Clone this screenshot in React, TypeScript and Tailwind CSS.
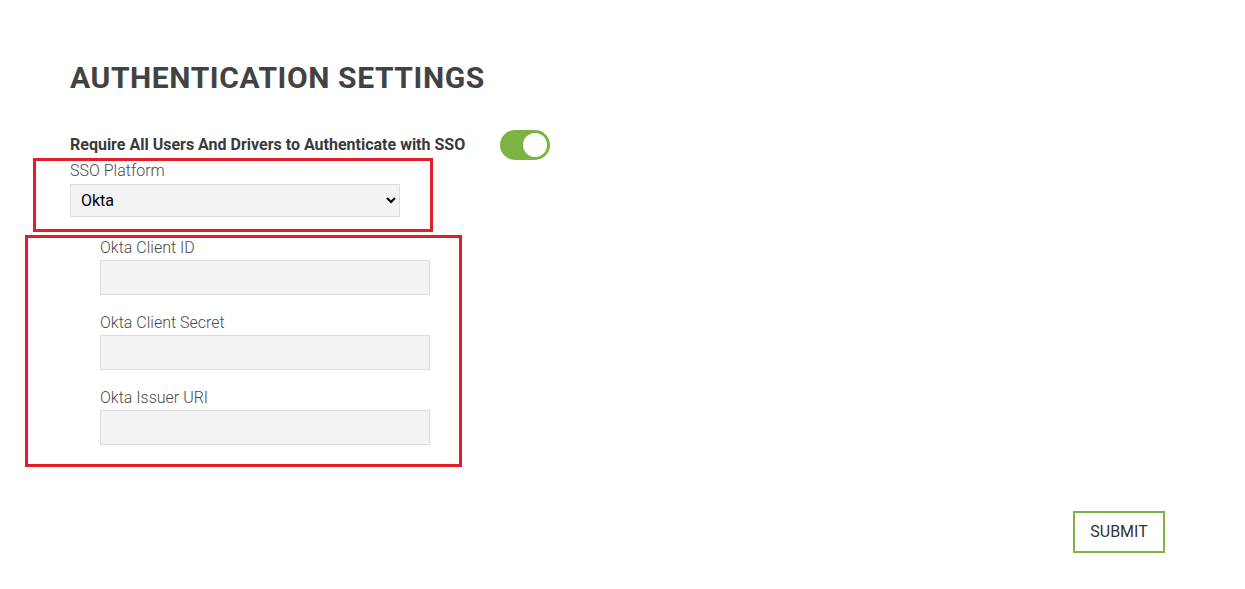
import { useState } from "react";

function Field({ label }: { label: string }) {
  return (
    <div className="flex flex-col">
      <label className="text-[16px] font-light leading-[20px] text-[#4a4a4a]">{label}</label>
      <input
        type="text"
        className="mt-[2px] h-[35px] w-[330px] border border-[#dcdcdc] bg-[#f3f3f3] px-2 text-[15px] outline-none"
      />
    </div>
  );
}

export default function App() {
  const [sso, setSso] = useState(true);

  return (
    <div className="min-h-[589px] w-full bg-white font-['Roboto',sans-serif] text-[#333]">
      <div className="pl-[70px] pr-[80px] pt-[63px]">
        <h1 className="text-[30px] font-bold leading-[30px] tracking-[0.6px] text-[#424242]">
          AUTHENTICATION SETTINGS
        </h1>

        <div className="mt-[37px] flex items-center gap-[35px]">
          <span className="text-[16px] font-bold leading-[20px] text-[#3a3a3a]">
            Require All Users And Drivers to Authenticate with SSO
          </span>
          <button
            onClick={() => setSso(!sso)}
            className="flex h-[30px] w-[50px] items-center rounded-full bg-[#7cb342] px-[3px]"
          >
            <span
              className={
                sso
                  ? "ml-auto h-[24px] w-[24px] rounded-full bg-white"
                  : "h-[24px] w-[24px] rounded-full bg-white"
              }
            />
          </button>
        </div>

        <div className="-ml-[37px] mt-[-2px] w-[400px] border-[3px] border-[#e41e26] pb-[12px] pl-[34px]">
          <label className="block text-[16px] font-light leading-[20px] text-[#4a4a4a]">SSO Platform</label>
          <select className="mt-[3px] h-[33px] w-[330px] border border-[#dcdcdc] bg-[#f3f3f3] px-[6px] text-[16px] text-black outline-none">
            <option>Okta</option>
          </select>
        </div>

        <div className="-ml-[45px] mt-[3px] flex w-[437px] flex-col gap-[18px] border-[3px] border-[#e41e26] pb-[19px] pl-[72px]">
          <Field label="Okta Client ID" />
          <Field label="Okta Client Secret" />
          <Field label="Okta Issuer URI" />
        </div>

        <div className="mt-[44px] flex justify-end">
          <button className="h-[42px] w-[92px] border-2 border-[#7cb342] bg-white text-[16px] text-[#333]">
            SUBMIT
          </button>
        </div>
      </div>
    </div>
  );
}
